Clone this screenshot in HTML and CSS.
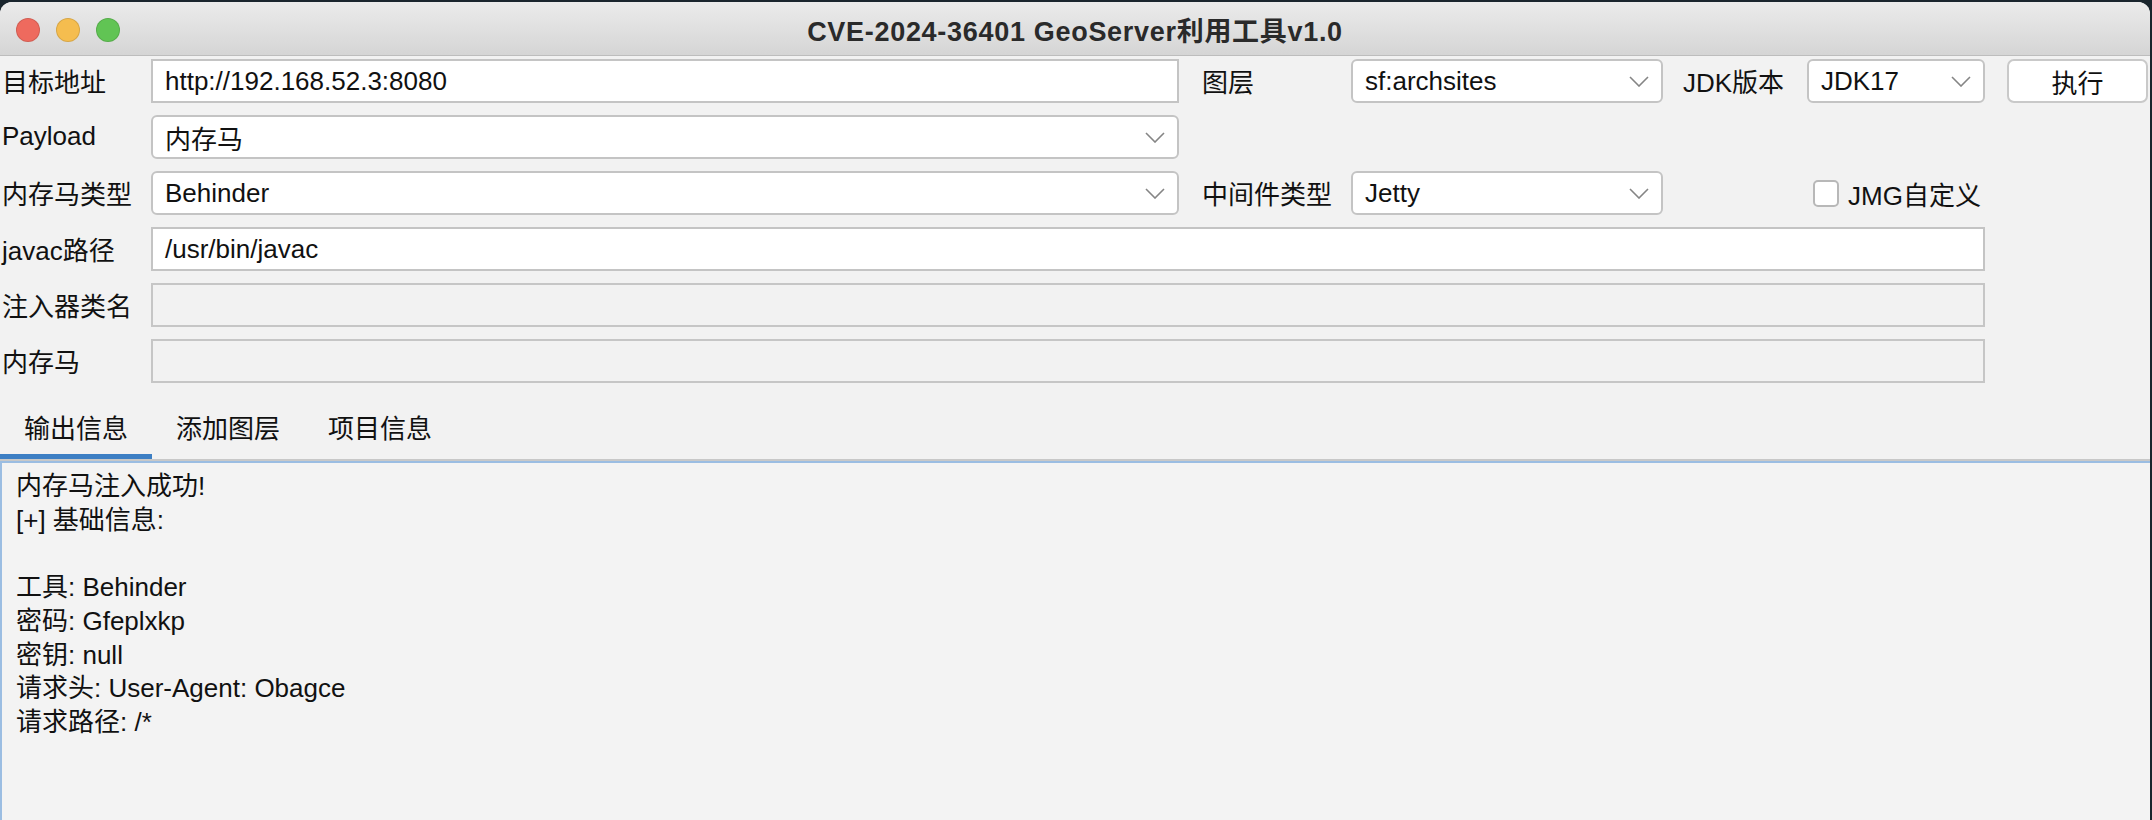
FILE: index.html
```html
<!DOCTYPE html>
<html lang="zh">
<head>
<meta charset="utf-8">
<title>CVE-2024-36401 GeoServer利用工具v1.0</title>
<link rel="stylesheet" href="styles.css">
</head>
<body>
<div class="window">
  <div class="titlebar">
    <div class="lights">
      <span class="light red"></span>
      <span class="light yellow"></span>
      <span class="light green"></span>
    </div>
    <div class="title">CVE-2024-36401 GeoServer利用工具v1.0</div>
    <div></div>
  </div>

  <div class="form">
    <div class="label">目标地址</div>
    <div class="field text">http://192.168.52.3:8080</div>
    <div class="label label2">图层</div>
    <div class="field combo"><span>sf:archsites</span><svg class="chev" viewBox="0 0 20 11"><polyline points="1,1 10,10 19,1"/></svg></div>
    <div class="label label3">JDK版本</div>
    <div class="field combo"><span>JDK17</span><svg class="chev" viewBox="0 0 20 11"><polyline points="1,1 10,10 19,1"/></svg></div>
    <div class="spacer"></div>
    <div class="button">执行</div>

    <div class="label">Payload</div>
    <div class="field combo"><span>内存马</span><svg class="chev" viewBox="0 0 20 11"><polyline points="1,1 10,10 19,1"/></svg></div>
    <div class="rest"></div>

    <div class="label">内存马类型</div>
    <div class="field combo"><span>Behinder</span><svg class="chev" viewBox="0 0 20 11"><polyline points="1,1 10,10 19,1"/></svg></div>
    <div class="label label2">中间件类型</div>
    <div class="field combo"><span>Jetty</span><svg class="chev" viewBox="0 0 20 11"><polyline points="1,1 10,10 19,1"/></svg></div>
    <div class="empty"></div>
    <div class="check"><span class="box"></span><span>JMG自定义</span></div>
    <div class="rest2"></div>

    <div class="label">javac路径</div>
    <div class="field text wide">/usr/bin/javac</div>
    <div class="rest2"></div>

    <div class="label">注入器类名</div>
    <div class="field text wide disabled"></div>
    <div class="rest2"></div>

    <div class="label">内存马</div>
    <div class="field text wide disabled"></div>
    <div class="rest2"></div>
  </div>

  <div class="tabs">
    <div class="tab active">输出信息</div>
    <div class="tab">添加图层</div>
    <div class="tab">项目信息</div>
  </div>

  <div class="output">内存马注入成功!
[+] 基础信息:

工具: Behinder
密码: Gfeplxkp
密钥: null
请求头: User-Agent: Obagce
请求路径: /*</div>
</div>
</body>
</html>
```

FILE: styles.css
```css
html, body {
  margin: 0;
  padding: 0;
}
body {
  background: #1a252d;
  width: 2152px;
  height: 820px;
  overflow: hidden;
  font-family: "Liberation Sans", "Noto Sans CJK SC", sans-serif;
  font-size: 26px;
  color: #111;
}
.window {
  margin-top: 2px;
  width: 2150px;
  height: 818px;
  background: #f2f2f2;
  border-radius: 12px 12px 0 0;
  overflow: hidden;
  display: flex;
  flex-direction: column;
}
.titlebar {
  height: 53px;
  border-bottom: 1px solid #bdbdbd;
  background: linear-gradient(#ebebeb, #d5d5d5);
  display: grid;
  grid-template-columns: 1fr auto 1fr;
  align-items: center;
}
.lights {
  display: flex;
  gap: 16px;
  padding-left: 16px;
  padding-top: 2px;
}
.light {
  width: 22px;
  height: 22px;
  border-radius: 50%;
  border: 1px solid rgba(0,0,0,0.12);
}
.red { background: #ee6a5e; }
.yellow { background: #f5bd4f; }
.green { background: #61c454; }
.title {
  font-weight: bold;
  font-size: 27px;
  letter-spacing: 0.7px;
  color: #2a2a2a;
  padding-top: 2px;
}
.form {
  display: grid;
  grid-template-columns: 151px 1028px 172px 312px 144px 178px 22px 141px;
  grid-auto-rows: 44px;
  row-gap: 12px;
  padding-top: 3px;
}
.label {
  display: flex;
  align-items: center;
  padding-left: 2px;
  padding-bottom: 2px;
  white-space: nowrap;
}
.label2 { padding-left: 23px; }
.label3 { padding-left: 20px; }
.field {
  box-sizing: border-box;
  border: 2px solid #c4c4c4;
  background: #fff;
  display: flex;
  align-items: center;
  padding: 0 12px;
  white-space: nowrap;
}
.combo {
  border-radius: 6px;
  justify-content: space-between;
}
.chev {
  width: 20px;
  height: 11px;
  fill: none;
  stroke: #858585;
  stroke-width: 1.6;
}
.wide { grid-column: 2 / 7; }
.disabled { background: #f2f2f2; border-color: #c6c6c6; }
.rest { grid-column: 3 / 9; }
.rest2 { grid-column: 7 / 9; }
.empty { grid-column: 5 / 6; }
.button {
  box-sizing: border-box;
  border: 2px solid #c9c9c9;
  border-radius: 7px;
  background: #fff;
  display: flex;
  align-items: center;
  justify-content: center;
}
.check {
  display: flex;
  align-items: center;
  gap: 9px;
  padding-left: 6px;
  white-space: nowrap;
}
.box {
  box-sizing: border-box;
  width: 26px;
  height: 27px;
  border: 2px solid #b8b8b8;
  border-radius: 5px;
  background: #fff;
}
.tabs {
  margin-top: 12px;
  display: flex;
  border-bottom: 2px solid #c8c8c8;
}
.tab {
  width: 152px;
  height: 64px;
  box-sizing: border-box;
  display: flex;
  align-items: center;
  justify-content: center;
  padding-bottom: 2px;
}
.active {
  box-shadow: inset 0 -5px 0 #3d7fc4;
}
.output {
  flex: 1;
  border-top: 2px solid #9bbde2;
  border-left: 2px solid #9bbde2;
  background: #f3f3f3;
  padding: 7px 14px;
  white-space: pre;
  line-height: 33.7px;
  color: #111;
}
```
